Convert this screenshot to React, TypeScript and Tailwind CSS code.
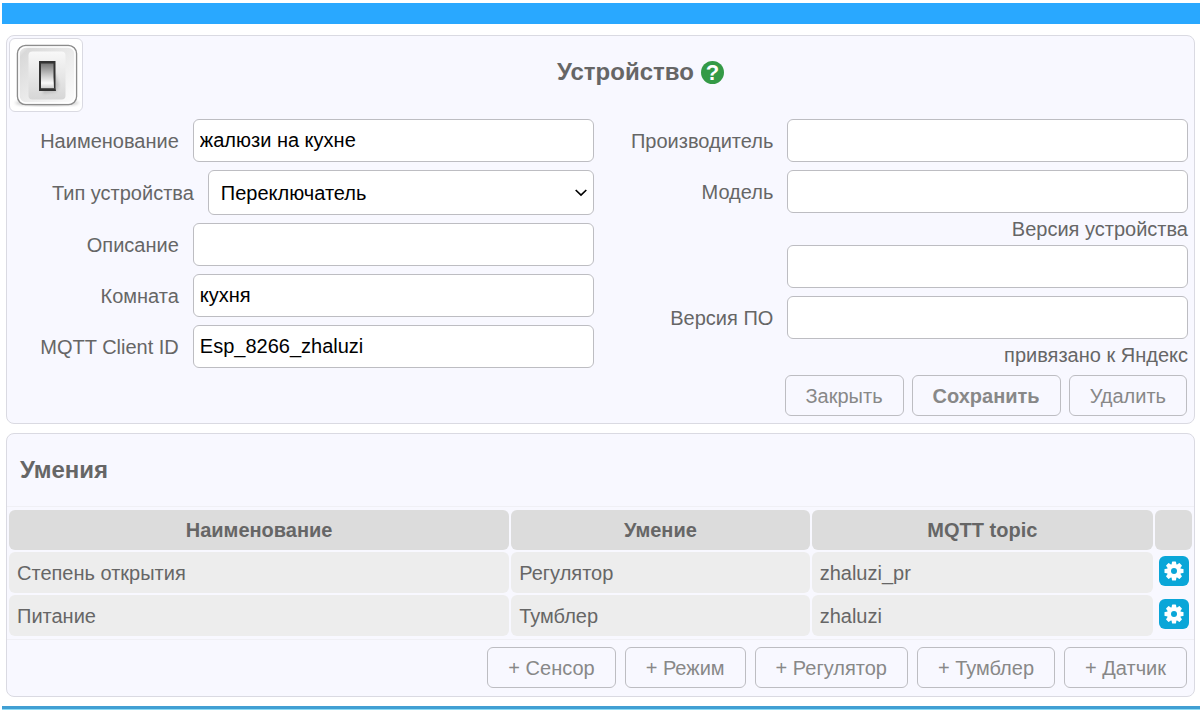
type TField = {
  id: string;
  label: string;
  value: string;
  wide?: boolean;
};

type TSkill = {
  name: string;
  skill: string;
  topic: string;
};

const productFields: TField[] = [
  { id: "vendor", label: "Производитель", value: "" },
  { id: "model", label: "Модель", value: "" },
  { id: "hw_version", label: "Версия устройства", value: "", wide: true },
  { id: "sw_version", label: "Версия ПО", value: "" },
];

const skills: TSkill[] = [
  { name: "Степень открытия", skill: "Регулятор", topic: "zhaluzi_pr" },
  { name: "Питание", skill: "Тумблер", topic: "zhaluzi" },
];

const skillButtons = ["Сенсор", "Режим", "Регулятор", "Тумблер", "Датчик"];

const inputStyle =
  "w-full h-[43px] px-[6px] bg-white border border-[#bdbdc2] rounded-md text-black";
const labelStyle = "pr-[14px] text-right whitespace-nowrap";
const headStyle = "h-10 bg-[#dcdcdc] rounded-md font-bold text-center";
const cellStyle = "h-[41px] px-2 bg-[#ededed] rounded-md";

const Field = ({ id, label, value, wide }: TField) => {
  if (wide) {
    return (
      <div className="-mt-2">
        <label htmlFor={id} className="block h-8 leading-8 text-right">
          {label}
        </label>
        <div className="grid grid-cols-[186fr_401fr]">
          <input
            id={id}
            className={`${inputStyle} col-start-2`}
            defaultValue={value}
          />
        </div>
      </div>
    );
  }

  return (
    <div className="grid grid-cols-[186fr_401fr] items-center">
      <label htmlFor={id} className={labelStyle}>
        {label}
      </label>
      <input id={id} className={inputStyle} defaultValue={value} />
    </div>
  );
};

const Button = ({ text, bold }: { text: string; bold?: boolean }) => (
  <button
    type="button"
    className={`h-[41px] px-5 border border-[#bdbdc2] rounded-md text-[#888] hover:bg-white ${
      bold ? "font-bold" : ""
    }`}
  >
    {text}
  </button>
);

const GearIcon = () => (
  <svg viewBox="-10 -10 20 20" className="w-5 h-5" aria-hidden="true">
    <g fill="currentColor">
      {[0, 45, 90, 135].map((angle) => (
        <path
          key={angle}
          d="M-1.4-9.5h2.8q.5 0 .6.5l.5 3v12l-.5 3q-.1.5-.6.5h-2.8q-.5 0-.6-.5l-.5-3v-12l.5-3q.1-.5.6-.5z"
          transform={`rotate(${angle})`}
        />
      ))}
      <circle r="7" />
    </g>
    <circle r="3" fill="#0aa6d8" />
  </svg>
);

const SwitchIcon = () => (
  <svg viewBox="0 0 72 72" className="w-[72px] h-[72px]" aria-hidden="true">
    <defs>
      <linearGradient id="frame" x1="0" y1="0" x2="1" y2="1">
        <stop offset="0" stopColor="#fafafa" />
        <stop offset="0.12" stopColor="#d9d9d9" />
        <stop offset="0.55" stopColor="#ececec" />
        <stop offset="1" stopColor="#fdfdfd" />
      </linearGradient>
      <linearGradient id="plate" x1="0" y1="0" x2="0" y2="1">
        <stop offset="0" stopColor="#f8f8f8" />
        <stop offset="1" stopColor="#d6d6d6" />
      </linearGradient>
      <linearGradient id="rocker" x1="0" y1="0" x2="0" y2="1">
        <stop offset="0" stopColor="#777" />
        <stop offset="0.45" stopColor="#c4c4c4" />
        <stop offset="0.8" stopColor="#fafafa" />
        <stop offset="1" stopColor="#d0d0d0" />
      </linearGradient>
      <filter id="soft">
        <feGaussianBlur stdDeviation="1.5" />
      </filter>
    </defs>
    <ellipse cx="37" cy="64" rx="32" ry="3" fill="#ccc" filter="url(#soft)" />
    <rect x="7.5" y="6.5" width="59" height="59" rx="8" fill="url(#frame)" stroke="#8c8c8c" strokeWidth="1.5" />
    <rect x="9" y="8" width="56" height="56" rx="7" fill="none" stroke="#fff" strokeWidth="1.5" />
    <rect x="18.5" y="12.5" width="37" height="48" rx="4" fill="url(#plate)" />
    <path d="M45 34l4 12-3 7-13 2v-5z" fill="#aaa" opacity="0.6" filter="url(#soft)" />
    <path d="M29 22h16.5v27l.5 3H29z" fill="#333" />
    <path d="M31 24.5h12.5V38l.5 11H31z" fill="url(#rocker)" />
    <path d="M31 49.5h13.5" stroke="#555" />
  </svg>
);

const DevicePanel = () => (
  <form className="bg-[#f8f8ff] border border-[#dadae2] rounded-lg pb-[7px] pr-[6px]">
    <div className="flex items-start pl-[2px] pt-[2px] pb-[7px]">
      <div className="w-[74px] h-[74px] shrink-0 bg-white border border-[#dadae2] rounded-md">
        <SwitchIcon />
      </div>
      <h1 className="grow flex items-center justify-center gap-[7px] h-[68px] pl-[10px] text-2xl font-bold">
        Устройство
        <a
          href="#help"
          aria-label="Справка"
          className="w-[23px] h-[23px] bg-[#349a46] rounded-full text-center text-[22px] leading-[23px] text-white"
        >
          ?
        </a>
      </h1>
    </div>
    <div className="grid grid-cols-2 gap-2">
      <div className="flex flex-col gap-2">
        <Field id="name" label="Наименование" value="жалюзи на кухне" />
        <div className="grid grid-cols-[201fr_386fr] items-center">
          <label htmlFor="type" className={labelStyle}>
            Тип устройства
          </label>
          <div className="relative">
            <select
              id="type"
              className="appearance-none w-full h-[45px] px-3 bg-white border border-[#bdbdc2] rounded-md text-black"
            >
              <option>Переключатель</option>
            </select>
            <svg
              viewBox="0 0 12 8"
              className="absolute right-[7px] top-[19px] w-3 h-2 pointer-events-none"
              fill="none"
              stroke="#000"
              strokeWidth="1.7"
            >
              <path d="M.7 1l5.3 5 5.3-5" />
            </svg>
          </div>
        </div>
        <Field id="description" label="Описание" value="" />
        <Field id="room" label="Комната" value="кухня" />
        <Field id="client_id" label="MQTT Client ID" value="Esp_8266_zhaluzi" />
      </div>
      <div>
        <div className="flex flex-col gap-2">
          {productFields.map((el: TField) => (
            <Field key={el.id} {...el} />
          ))}
        </div>
        <p className="h-8 leading-8 mb-1 text-right">привязано к Яндекс</p>
        <div className="flex justify-end gap-2 pr-px">
          <Button text="Закрыть" />
          <Button text="Сохранить" bold />
          <Button text="Удалить" />
        </div>
      </div>
    </div>
  </form>
);

const SkillsPanel = () => (
  <section className="bg-[#f8f8ff] border border-[#dadae2] rounded-lg pb-2">
    <h2 className="h-[72px] leading-[72px] px-[13px] text-2xl font-bold">
      Умения
    </h2>
    <div className="border-y border-[#f0f0f5] py-px">
      <table className="w-full table-fixed border-separate border-spacing-[2px]">
        <colgroup>
          <col className="w-[42.5%]" />
          <col />
          <col className="w-[29%]" />
          <col className="w-[37px]" />
        </colgroup>
        <thead>
          <tr>
            <th className={headStyle}>Наименование</th>
            <th className={headStyle}>Умение</th>
            <th className={headStyle}>MQTT topic</th>
            <th className={headStyle}></th>
          </tr>
        </thead>
        <tbody>
          {skills.map((el: TSkill) => (
            <tr key={el.topic}>
              <td className={cellStyle}>{el.name}</td>
              <td className={cellStyle}>{el.skill}</td>
              <td className={cellStyle}>{el.topic}</td>
              <td className="pb-1">
                <button
                  type="button"
                  aria-label="Настроить"
                  className="flex items-center justify-center w-[30px] h-[30px] mx-auto bg-[#0aa6d8] rounded-md text-white"
                >
                  <GearIcon />
                </button>
              </td>
            </tr>
          ))}
        </tbody>
      </table>
    </div>
    <div className="flex justify-end gap-[9px] pt-[7px] pr-[7px]">
      {skillButtons.map((el: string) => (
        <Button key={el} text={`+ ${el}`} />
      ))}
    </div>
  </section>
);

const App = () => {
  return (
    <div className="bg-white font-['Liberation_Sans',Arial,sans-serif] text-xl leading-6 text-[#666]">
      <header className="h-[21px] mt-[3px] ml-[2px] bg-[#29a8ff]"></header>
      <main className="flex flex-col gap-[9px] pt-[11px] pr-[5px] pb-[9px] pl-[6px]">
        <DevicePanel />
        <SkillsPanel />
      </main>
      <footer className="h-1 ml-[2px] bg-[#419fd3] border-b border-[#8edcf5]"></footer>
    </div>
  );
};

export default App;
